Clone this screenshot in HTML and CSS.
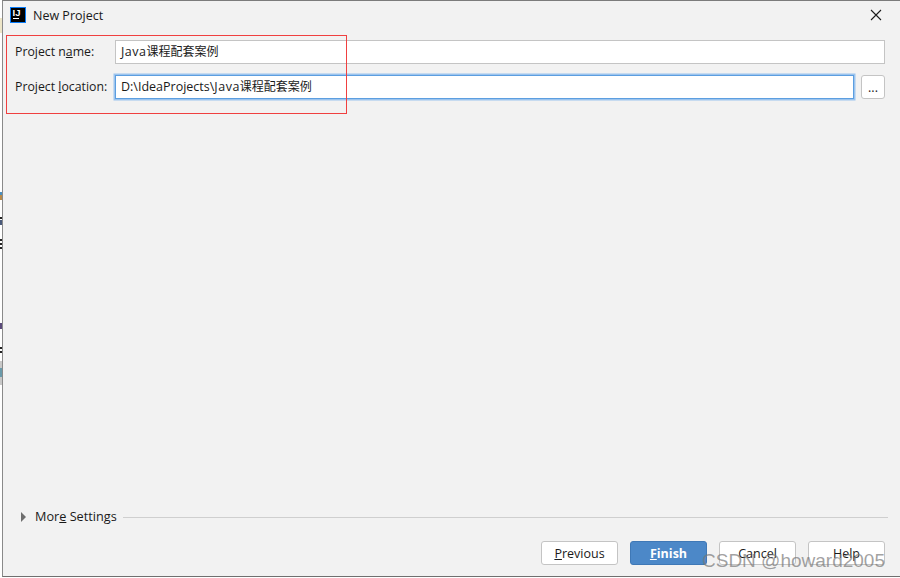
FILE: index.html
```html
<!DOCTYPE html>
<html lang="en">
<head>
<meta charset="utf-8">
<title>New Project</title>
<link rel="stylesheet" href="styles.css">
</head>
<body>
<div class="screen">
  <svg class="sliver" width="2" height="578" viewBox="0 0 2 578" aria-hidden="true">
    <rect width="2" height="578" fill="#ffffff"/>
    <rect y="18" width="2" height="15" fill="#eee6c8"/>
    <rect y="192" width="2" height="3" fill="#4a90c0"/>
    <rect y="195" width="2" height="5" fill="#b88a4a"/>
    <rect y="217" width="2" height="2" fill="#222222"/>
    <rect y="220" width="2" height="5" fill="#4a5a7a"/>
    <rect y="239" width="2" height="2" fill="#222222"/>
    <rect y="243" width="2" height="2" fill="#222222"/>
    <rect y="247" width="2" height="2" fill="#222222"/>
    <rect y="323" width="2" height="6" fill="#5a4a7a"/>
    <rect y="347" width="2" height="2" fill="#222222"/>
    <rect y="351" width="2" height="2" fill="#222222"/>
    <rect y="361" width="2" height="24" fill="#c8c8c8"/>
    <rect y="368" width="2" height="9" fill="#6a9aaa"/>
  </svg>
  <main class="dialog">
    <header class="titlebar">
      <svg class="logo" width="16" height="16" viewBox="0 0 16 16" aria-hidden="true">
        <rect width="16" height="16" fill="#087cfa"/>
        <rect x="1" y="1" width="14" height="14" fill="#000000"/>
        <rect x="3" y="11" width="6" height="1" fill="#ffffff"/>
        <text x="2.5" y="9" class="logo-text">IJ</text>
      </svg>
      <span class="title">New Project</span>
      <svg class="close" width="12" height="12" viewBox="0 0 12 12" aria-hidden="true">
        <path d="M1 1 L11 11 M11 1 L1 11" stroke="#1a1a1a" stroke-width="1.1" fill="none"/>
      </svg>
    </header>
    <section class="form">
      <div class="row">
        <label class="label">Project n<u>a</u>me:</label>
        <div class="input"><span class="latin">Java</span><span class="cjk">课程配套案例</span></div>
      </div>
      <div class="row">
        <label class="label">Project <u>l</u>ocation:</label>
        <div class="input focused">D:\IdeaProjects\<span class="latin">Java</span><span class="cjk">课程配套案例</span></div>
        <button class="btn browse">...</button>
      </div>
    </section>
    <div class="spacer"></div>
    <div class="more">
      <span class="triangle"></span>
      <span class="more-label">Mor<u>e</u> Settings</span>
      <span class="rule"></span>
    </div>
    <footer class="actions">
      <button class="btn"><u>P</u>revious</button>
      <button class="btn primary"><u>F</u>inish</button>
      <button class="btn">Cancel</button>
      <button class="btn">Help</button>
    </footer>
  </main>
  <div class="redbox"></div>
  <div class="watermark">CSDN @howard2005</div>
</div>
</body>
</html>
```
FILE: styles.css
```css
* { box-sizing: border-box; }
html, body { margin: 0; padding: 0; }
body {
  width: 900px;
  height: 578px;
  overflow: hidden;
  font-family: "Open Sans", "Noto Sans CJK SC", sans-serif;
  font-size: 12.5px;
  color: #1a1a1a;
}
.screen {
  position: relative;
  display: flex;
  width: 900px;
  height: 578px;
}
.sliver { flex: none; display: block; }
.dialog {
  flex: 1;
  display: flex;
  flex-direction: column;
  height: 577px;
  background: #f2f2f2;
  border-top: 1px solid #7c7c7c;
  border-left: 1px solid #8a8a8a;
  border-bottom: 1px solid #6f6f6f;
}
.titlebar {
  flex: none;
  display: flex;
  align-items: center;
  height: 28px;
  padding-left: 7px;
  padding-right: 18px;
}
.logo { flex: none; display: block; }
.logo-text {
  font-family: "Liberation Sans", sans-serif;
  font-size: 9.5px;
  font-weight: 700;
  fill: #ffffff;
}
.title { margin-left: 7px; flex: 1; }
.close { flex: none; }
.form {
  flex: none;
  display: flex;
  flex-direction: column;
  gap: 11px;
  padding: 11px 15px 0 12px;
}
.row {
  display: flex;
  align-items: center;
  gap: 7px;
  height: 24px;
}
.label {
  flex: none;
  width: 93px;
  padding-bottom: 2px;
  font-size: 12.3px;
  white-space: nowrap;
}
.input {
  flex: 1;
  height: 24px;
  line-height: 22px;
  padding-left: 5px;
  background: #ffffff;
  border: 1px solid #c4c4c4;
  white-space: nowrap;
}
.latin { letter-spacing: 0.5px; }
.cjk { font-size: 12px; }
.input.focused {
  border: 1px solid #5c9ee0;
  box-shadow: 0 0 0 1.5px #9cc4ee;
}
.btn {
  flex: none;
  width: 77px;
  height: 24px;
  padding: 0;
  font: inherit;
  color: #1a1a1a;
  background: #ffffff;
  border: 1px solid #c4c4c4;
  border-radius: 3px;
}
.browse { width: 24px; }
.primary {
  background: #4c88c8;
  border-color: #3f78b6;
  color: #ffffff;
  font-weight: 700;
}
.spacer { flex: 1; }
.more {
  flex: none;
  display: flex;
  align-items: center;
  height: 18px;
  padding-left: 18px;
  padding-right: 12px;
}
.triangle {
  flex: none;
  width: 0;
  height: 0;
  border-top: 5px solid transparent;
  border-bottom: 5px solid transparent;
  border-left: 5px solid #6e6e6e;
}
.more-label { margin-left: 9px; padding-bottom: 2px; font-size: 12.7px; white-space: nowrap; }
.rule {
  flex: 1;
  height: 1px;
  margin-left: 6px;
  background: #cfcfcf;
}
.actions {
  flex: none;
  display: flex;
  justify-content: flex-end;
  gap: 12px;
  height: 50px;
  padding: 15px 15px 0 0;
}
.redbox {
  position: absolute;
  left: 6px;
  top: 35px;
  width: 341px;
  height: 79px;
  border: 1px solid #f04040;
  pointer-events: none;
}
.watermark {
  position: absolute;
  left: 702px;
  top: 547px;
  font-family: "Liberation Sans", sans-serif;
  font-size: 19px;
  line-height: 28px;
  color: rgba(120, 120, 120, 0.7);
  white-space: nowrap;
  pointer-events: none;
}
```
